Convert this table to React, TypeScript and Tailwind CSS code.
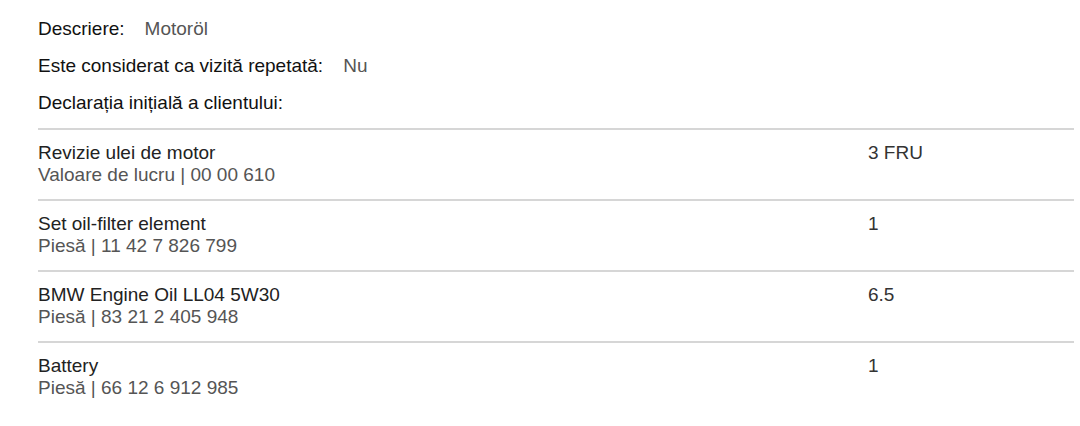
import React from "react";

const items = [
  { title: "Revizie ulei de motor", sub: "Valoare de lucru | 00 00 610", qty: "3 FRU" },
  { title: "Set oil-filter element", sub: "Piesă | 11 42 7 826 799", qty: "1" },
  { title: "BMW Engine Oil LL04 5W30", sub: "Piesă | 83 21 2 405 948", qty: "6.5" },
  { title: "Battery", sub: "Piesă | 66 12 6 912 985", qty: "1" },
];

export default function App() {
  return (
    <div
      className="w-[1080px] h-[426px] bg-white pl-[38px] pr-[6px] pt-[17px]"
      style={{ fontFamily: '"Liberation Sans", Arial, sans-serif' }}
    >
      <div className="flex flex-col gap-[13px] text-[19px] leading-[24px]">
        <div className="flex gap-[20px]">
          <span className="text-[#111]">Descriere:</span>
          <span className="text-[#555]">Motoröl</span>
        </div>
        <div className="flex gap-[20px]">
          <span className="text-[#111]">Este considerat ca vizită repetată:</span>
          <span className="text-[#555]">Nu</span>
        </div>
        <div className="flex gap-[20px]">
          <span className="text-[#111]">Declarația inițială a clientului:</span>
        </div>
      </div>
      <div className="mt-[13px]">
        {items.map((it) => (
          <div
            key={it.title}
            className="flex border-t-2 border-[#d6d6d6] h-[71px] pt-[12px] text-[19px] leading-[22px]"
          >
            <div className="w-[830px] flex flex-col">
              <span className="text-[#222]">{it.title}</span>
              <span className="text-[#555]">{it.sub}</span>
            </div>
            <div className="text-[#333]">{it.qty}</div>
          </div>
        ))}
      </div>
    </div>
  );
}
